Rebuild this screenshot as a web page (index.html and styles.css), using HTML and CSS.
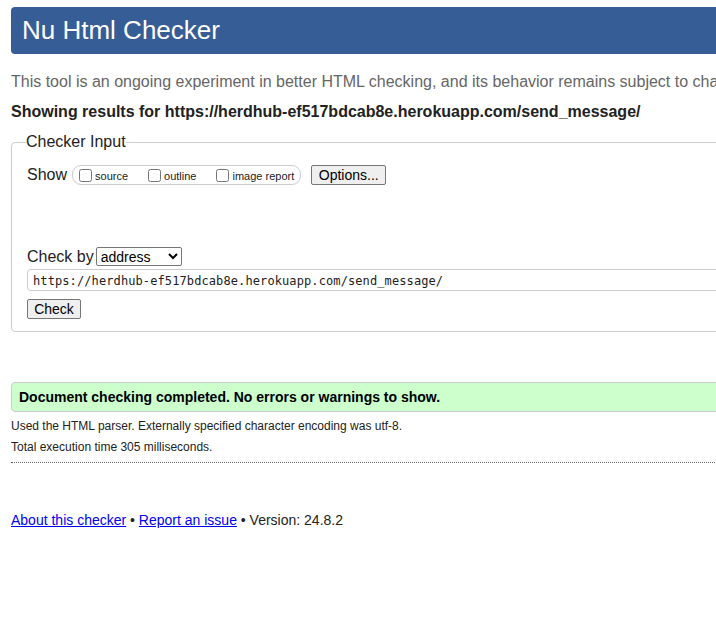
FILE: index.html
```html
<!DOCTYPE html>
<html lang="en">
<head>
<meta charset="utf-8">
<title>Nu Html Checker</title>
<link rel="stylesheet" href="styles.css">
</head>
<body>
<div class="page">
  <h1 class="title">Nu Html Checker</h1>
  <p class="desc">This tool is an ongoing experiment in better HTML checking, and its behavior remains subject to change</p>
  <p class="result">Showing results for https://herdhub-ef517bdcab8e.herokuapp.com/send_message/</p>

  <fieldset class="input-box">
    <legend class="input-legend">Checker Input</legend>
    <div class="show-row">
      <span class="show-label">Show</span>
      <span class="show-opts">
        <label class="opt"><input type="checkbox" class="cb">source</label>
        <label class="opt"><input type="checkbox" class="cb">outline</label>
        <label class="opt last"><input type="checkbox" class="cb">image report</label>
      </span>
      <button class="btn options-btn" type="button">Options...</button>
    </div>
    <div class="checkby-row">
      <span class="checkby-label">Check by</span>
      <select class="checkby-select">
        <option>address</option>
      </select>
    </div>
    <input class="url-input" type="text" value="https://herdhub-ef517bdcab8e.herokuapp.com/send_message/">
    <div class="check-row">
      <button class="btn check-btn" type="button">Check</button>
    </div>
  </fieldset>

  <p class="success">Document checking completed. No errors or warnings to show.</p>
  <p class="info">Used the HTML parser. Externally specified character encoding was utf-8.</p>
  <p class="info">Total execution time 305 milliseconds.</p>
  <hr class="sep">

  <p class="footer"><a href="#" class="link">About this checker</a> • <a href="#" class="link">Report an issue</a> • Version: 24.8.2</p>
</div>
</body>
</html>
```
FILE: styles.css
```css
html {
  overflow: hidden;
}
body {
  margin: 0;
  background: #fff;
  font-family: "Liberation Sans", Arial, sans-serif;
  color: #222;
}
.page {
  width: 1200px;
  padding: 7px 0 0 11px;
}
.title {
  margin: 0;
  height: 47px;
  line-height: 46px;
  padding-left: 11px;
  background: #365d95;
  color: #fff;
  font-size: 26px;
  font-weight: normal;
  border-radius: 4px;
}
.desc {
  margin: 18px 0 0;
  font-size: 16px;
  line-height: 20px;
  color: #666;
  white-space: nowrap;
}
.result {
  margin: 10px 0 0;
  font-size: 16px;
  line-height: 20px;
  font-weight: bold;
  color: #222;
}
.input-box {
  margin: 11px 0 0;
  border: 1px solid #ccc;
  border-radius: 4px;
  padding: 0 15px 12px;
}
.input-legend {
  padding: 0;
  margin-left: -1px;
  font-size: 16px;
  line-height: 18px;
  color: #222;
}
.show-row {
  display: flex;
  align-items: center;
  margin-top: 14px;
  height: 20px;
}
.show-label {
  font-size: 16px;
  margin-right: 5px;
}
.show-opts {
  display: inline-flex;
  align-items: center;
  height: 18px;
  border: 1px solid #ccc;
  border-radius: 9px;
  padding: 0 6px 0 6px;
}
.opt {
  display: inline-flex;
  align-items: center;
  font-size: 11px;
  padding-top: 2px;
  margin-right: 20px;
  color: #222;
}
.opt.last {
  margin-right: 0;
}
.cb {
  margin: -2px 3px 0 0;
  width: 13px;
  height: 13px;
}
.btn {
  font-family: "Liberation Sans", Arial, sans-serif;
  font-size: 14px;
  color: #000;
  background: #efefef;
  border: 1px solid #767676;
  border-radius: 2px;
  padding: 0 6px;
  height: 20px;
  line-height: 18px;
}
.options-btn {
  margin-left: 10px;
  width: 75px;
}
.checkby-row {
  display: flex;
  align-items: center;
  margin-top: 62px;
  height: 19px;
}
.checkby-label {
  font-size: 16px;
  margin-right: 2px;
  padding-top: 1px;
}
.checkby-select {
  width: 86px;
  height: 19px;
  font-family: "Liberation Sans", Arial, sans-serif;
  font-size: 14px;
  padding: 0;
  border: 1px solid #767676;
  border-radius: 2px;
  background: #fff;
  color: #000;
}
.url-input {
  display: block;
  box-sizing: border-box;
  margin-top: 3px;
  width: 100%;
  height: 22px;
  border: 1px solid #ccc;
  border-radius: 4px;
  padding: 1px 5px 0;
  font-family: "DejaVu Sans Mono", "Liberation Mono", monospace;
  font-size: 12px;
  letter-spacing: 0.1px;
  color: #222;
}
.check-row {
  margin-top: 8px;
  display: flex;
}
.check-btn {
  width: 54px;
  padding: 0;
}
.success {
  margin: 50px 0 0;
  box-sizing: border-box;
  height: 30px;
  line-height: 28px;
  background: #ccffcc;
  border: 1px solid #ccc;
  border-radius: 4px;
  padding-left: 7px;
  font-size: 14px;
  font-weight: bold;
  color: #000;
}
.info {
  margin: 7px 0 0;
  font-size: 12px;
  line-height: 15px;
  color: #222;
}
.info + .info {
  margin-top: 6px;
}
.sep {
  margin: 7px 0 0;
  border: 0;
  border-top: 1px dotted #666;
  height: 0;
}
.footer {
  margin: 49px 0 0;
  font-size: 14px;
  line-height: 16px;
  color: #222;
}
.link {
  color: #00e;
  text-decoration: underline;
}
```
